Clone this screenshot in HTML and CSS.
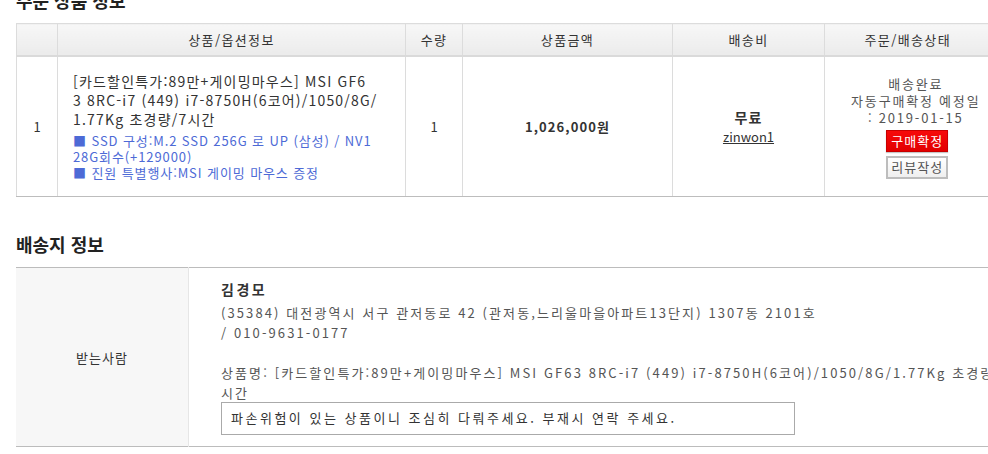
FILE: index.html
```html
<!DOCTYPE html>
<html lang="ko">
<head>
<meta charset="utf-8">
<title>주문 상세</title>
<link rel="stylesheet" href="styles.css">
</head>
<body>
<div class="page">
  <h2 class="sec-title sec-first">주문 상품 정보</h2>
  <table class="order">
    <colgroup>
      <col class="c-no"><col class="c-prod"><col class="c-qty"><col class="c-price"><col class="c-fee"><col class="c-status">
    </colgroup>
    <thead>
      <tr>
        <th></th>
        <th>상품/옵션정보</th>
        <th>수량</th>
        <th>상품금액</th>
        <th>배송비</th>
        <th>주문/배송상태</th>
      </tr>
    </thead>
    <tbody>
      <tr>
        <td class="center">1</td>
        <td class="prod">
          <div class="prod-name">[카드할인특가:89만+게이밍마우스] MSI GF6<br>3 8RC-i7 (449) i7-8750H(6코어)/1050/8G/<br>1.77Kg 초경량/7시간</div>
          <div class="prod-opt">■ SSD 구성:M.2 SSD 256G 로 UP (삼성) / NV1<br>28G회수(+129000)</div>
          <div class="prod-opt">■ 진원 특별행사:MSI 게이밍 마우스 증정</div>
        </td>
        <td class="center">1</td>
        <td class="center price">1,026,000원</td>
        <td class="center">
          <div class="fee">무료</div>
          <a class="seller">zinwon1</a>
        </td>
        <td class="center status">
          <div class="status-text">배송완료<br>자동구매확정 예정일<br>: 2019-01-15</div>
          <div class="btns">
            <button class="btn btn-red">구매확정</button>
            <button class="btn btn-gray">리뷰작성</button>
          </div>
        </td>
      </tr>
    </tbody>
  </table>

  <h2 class="sec-title">배송지 정보</h2>
  <table class="ship">
    <tr>
      <th>받는사람</th>
      <td>
        <div class="name">김경모</div>
        <div class="addr">(35384) 대전광역시 서구 관저동로 42 (관저동,느리울마을아파트13단지) 1307동 2101호<br>/ 010-9631-0177</div>
        <div class="pname">상품명: [카드할인특가:89만+게이밍마우스] MSI GF63 8RC-i7 (449) i7-8750H(6코어)/1050/8G/1.77Kg 초경량/<br>시간</div>
        <div class="memo">파손위험이 있는 상품이니 조심히 다뤄주세요. 부재시 연락 주세요.</div>
      </td>
    </tr>
  </table>
</div>
</body>
</html>
```
FILE: styles.css
```css
html, body {
  margin: 0;
  padding: 0;
  overflow: hidden;
  background: #fff;
}
body {
  font-family: "Noto Sans CJK KR", "Liberation Sans", sans-serif;
  font-size: 13px;
  color: #333;
}
.page {
  width: 1000px;
  padding-left: 16px;
}
.sec-title {
  font-size: 18px;
  line-height: 22px;
  font-weight: bold;
  color: #222;
  margin: 36px 0 12px;
}
.sec-first {
  margin-top: -11px;
}
table {
  border-collapse: collapse;
  table-layout: fixed;
}
.order { width: 974px; }
.ship { width: 1000px; }
.c-no { width: 41px; }
.c-prod { width: 348px; }
.c-qty { width: 57px; }
.c-price { width: 210px; }
.c-fee { width: 152px; }
.c-status { width: 166px; }

.order thead th {
  height: 31px;
  padding: 0;
  font-weight: normal;
  font-size: 13px;
  letter-spacing: 1.4px;
  color: #333;
  background: linear-gradient(#f7f7f7, #ebebeb);
  border-top: 1px solid #dcdcdc;
  border-bottom: 2px solid #dadada;
  border-left: 1px solid #dcdcdc;
}
.order tbody td {
  border-left: 1px solid #dcdcdc;
  border-bottom: 1px solid #bdbdbd;
  vertical-align: middle;
  padding: 0;
  height: 139px;
}
.center { text-align: center; }
.prod {
  padding: 0 15px !important;
}
.prod-name {
  font-size: 14px;
  line-height: 19px;
  letter-spacing: 1.2px;
  color: #333;
  white-space: nowrap;
}
.prod-opt {
  font-size: 13px;
  line-height: 16px;
  letter-spacing: 0.9px;
  color: #4d6ad6;
  white-space: nowrap;
}
.prod-name + .prod-opt {
  margin-top: 4px;
}
.price {
  font-weight: bold;
  font-size: 13px;
  letter-spacing: 1.1px;
  color: #333;
}
.fee {
  font-weight: bold;
  font-size: 14px;
  line-height: 20px;
  letter-spacing: 1px;
}
.seller {
  text-decoration: underline;
  color: #333;
  font-size: 13px;
  line-height: 20px;
}
.status {
  padding-left: 16px !important;
}
.status-text {
  font-size: 13px;
  line-height: 17px;
  letter-spacing: 1.8px;
  color: #555;
}
.btns {
  display: flex;
  flex-direction: column;
  align-items: center;
  gap: 4px;
  margin-top: 4px;
  padding-left: 3px;
}
.btn {
  width: 62px;
  height: 22px;
  padding: 0;
  font-family: inherit;
  font-size: 13px;
  line-height: 18px;
  letter-spacing: 1px;
  cursor: pointer;
}
.btn-red {
  background: linear-gradient(#f70a0a, #e20000);
  border: 1px solid #c80000;
  color: #fff;
  box-shadow: 0 1px 1px #c8c8c8;
}
.btn-gray {
  background: linear-gradient(#ffffff, #efefef);
  border: 2px solid #bdbdbd;
  color: #555;
  height: 23px;
}

.ship {
  border-top: 1px solid #bcbcbc;
  border-bottom: 1px solid #bcbcbc;
}
.ship th {
  width: 172px;
  background: #f7f7f7;
  font-weight: normal;
  color: #333;
  font-size: 13px;
  letter-spacing: 1px;
  border-right: 1px solid #e6e6e6;
  padding: 0;
}
.ship td {
  padding: 10px 0 11px 32px;
  color: #555;
  font-size: 13px;
  line-height: 20px;
  letter-spacing: 2.1px;
}
.name {
  font-weight: bold;
  font-size: 14px;
  color: #333;
  line-height: 22px;
  margin-bottom: 3px;
  letter-spacing: 2.5px;
}
.addr, .pname {
  white-space: nowrap;
}
.pname {
  margin-top: 20px;
}
.memo {
  width: 563px;
  height: 31px;
  border: 1px solid #aaa;
  padding: 0 0 0 9px;
  line-height: 30px;
  letter-spacing: 2.5px;
  color: #333;
  margin-top: -1px;
}
```
